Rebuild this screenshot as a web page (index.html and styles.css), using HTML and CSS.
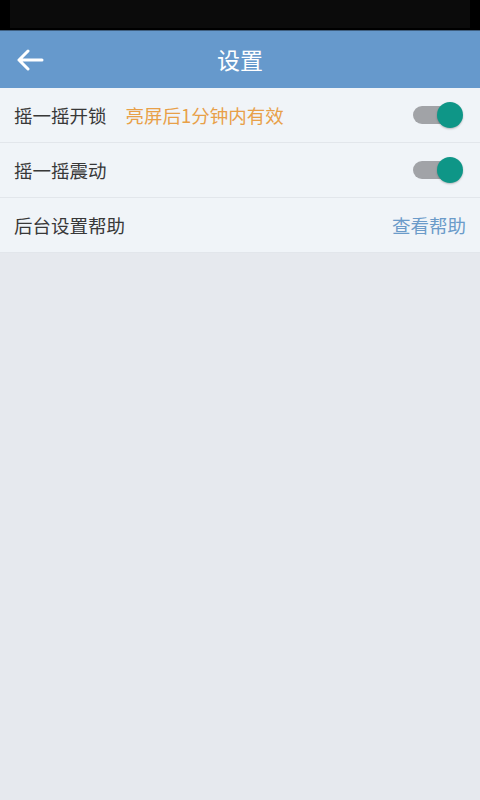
FILE: index.html
```html
<!DOCTYPE html>
<html lang="zh">
<head>
<meta charset="utf-8">
<link rel="stylesheet" href="styles.css">
</head>
<body>
<div class="status"><div class="status-inner"></div></div>
<header class="bar">
  <svg class="back" width="28" height="22" viewBox="0 0 28 22"><path d="M26 11H3M12 2L3 11L12 20" fill="none" stroke="#fff" stroke-width="3" stroke-linecap="round" stroke-linejoin="round"/></svg>
  <h1 class="title">设置</h1>
</header>
<ul class="list">
  <li class="row"><span class="label">摇一摇开锁</span><span class="note">亮屏后1分钟内有效</span><span class="switch"><span class="track"></span><span class="knob"></span></span></li>
  <li class="row"><span class="label">摇一摇震动</span><span class="switch"><span class="track"></span><span class="knob"></span></span></li>
  <li class="row"><span class="label">后台设置帮助</span><span class="link">查看帮助</span></li>
</ul>
</body>
</html>
```
FILE: styles.css
```css
html, body { margin: 0; padding: 0; }
body {
  width: 480px; height: 800px; background: #e6e9ee;
  font-family: "Noto Sans CJK SC", "Noto Sans", sans-serif;
  overflow: hidden;
}
.status { height: 30px; background: #000; padding: 0 10px; border-bottom: 1px solid #3f5f80; }
.status-inner { height: 28px; background: #0b0b0b; }
.bar {
  height: 57px; background: #6699cc; position: relative;
  display: flex; align-items: center; justify-content: center;
}
.back { position: absolute; left: 16px; top: 18px; }
.title { margin: 0; font-size: 23px; font-weight: normal; color: #fff; line-height: 1; }
.list { list-style: none; margin: 0; padding: 0; background: #f0f4f8; }
.row {
  height: 54px; display: flex; align-items: center; padding: 0 14px;
  border-bottom: 1px solid #e2e6eb; font-size: 18.5px; color: #383838;
}
.label { line-height: 1; }
.note { margin-left: 19px; color: #e8a048; line-height: 1; }
.link { margin-left: auto; color: #6b9bc9; line-height: 1; }
.switch { margin-left: auto; position: relative; width: 50px; height: 28px; margin-right: 3px; }
.track { position: absolute; left: 0; top: 5px; width: 40px; height: 18px; border-radius: 9px; background: #a1a3a7; }
.knob {
  position: absolute; right: 0; top: 1px; width: 26px; height: 26px; border-radius: 50%;
  background: #0e9687; box-shadow: 0 1px 2px rgba(0,0,0,0.25);
}
```
